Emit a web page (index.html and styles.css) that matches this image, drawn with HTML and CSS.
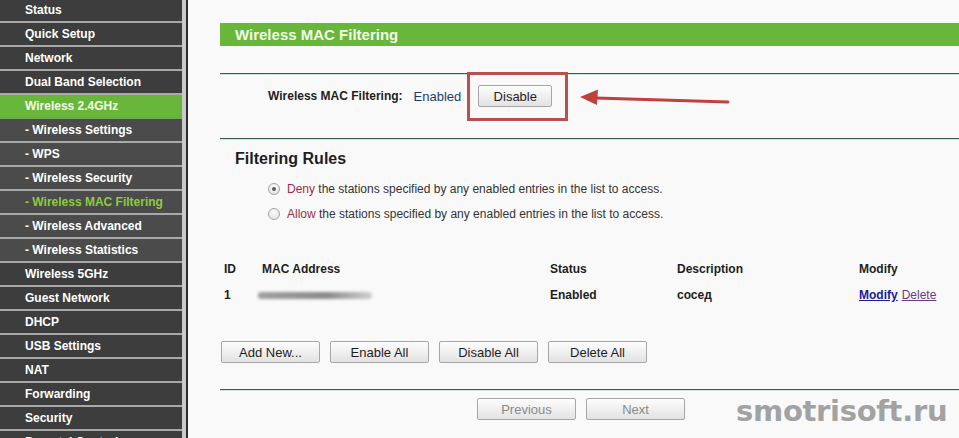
FILE: index.html
```html
<!DOCTYPE html>
<html>
<head>
<meta charset="utf-8">
<title>Wireless MAC Filtering</title>
<link rel="stylesheet" href="styles.css">
</head>
<body>
<div class="page">
  <nav class="sidebar">
    <ul class="menu">
      <li class="item">Status</li>
      <li class="item">Quick Setup</li>
      <li class="item">Network</li>
      <li class="item">Dual Band Selection</li>
      <li class="item item-open">Wireless 2.4GHz</li>
      <li class="item sub">- Wireless Settings</li>
      <li class="item sub">- WPS</li>
      <li class="item sub">- Wireless Security</li>
      <li class="item sub sub-active">- Wireless MAC Filtering</li>
      <li class="item sub">- Wireless Advanced</li>
      <li class="item sub">- Wireless Statistics</li>
      <li class="item">Wireless 5GHz</li>
      <li class="item">Guest Network</li>
      <li class="item">DHCP</li>
      <li class="item">USB Settings</li>
      <li class="item">NAT</li>
      <li class="item">Forwarding</li>
      <li class="item">Security</li>
      <li class="item">Parental Control</li>
    </ul>
  </nav>
  <main class="content">
    <div class="title">Wireless MAC Filtering</div>
    <div class="rule"></div>
    <div class="status-row">
      <span class="status-label">Wireless MAC Filtering:</span>
      <span class="status-value">Enabled</span>
      <button class="btn btn-disable">Disable</button>
    </div>
    <div class="rule rule-2"></div>
    <h2 class="section-title">Filtering Rules</h2>
    <div class="radio-row">
      <span class="radio checked"></span>
      <span class="radio-text"><span class="kw">Deny</span> the stations specified by any enabled entries in the list to access.</span>
    </div>
    <div class="radio-row">
      <span class="radio"></span>
      <span class="radio-text"><span class="kw">Allow</span> the stations specified by any enabled entries in the list to access.</span>
    </div>
    <div class="table">
      <div class="cell head">ID</div>
      <div class="cell head">MAC Address</div>
      <div class="cell head">Status</div>
      <div class="cell head">Description</div>
      <div class="cell head">Modify</div>
      <div class="cell val">1</div>
      <div class="cell"><span class="mac-blur"></span></div>
      <div class="cell val">Enabled</div>
      <div class="cell val">сосед</div>
      <div class="cell links"><a class="link-modify" href="#">Modify</a><a class="link-delete" href="#">Delete</a></div>
    </div>
    <div class="btn-row">
      <button class="btn btn-wide">Add New...</button>
      <button class="btn btn-wide">Enable All</button>
      <button class="btn btn-wide">Disable All</button>
      <button class="btn btn-wide">Delete All</button>
    </div>
    <div class="rule rule-3"></div>
    <div class="nav-row">
      <button class="btn btn-wide btn-off">Previous</button>
      <button class="btn btn-wide btn-off">Next</button>
    </div>
  </main>

  <div class="highlight-box"></div>
  <svg class="arrow" width="160" height="24" viewBox="0 0 160 24">
    <path d="M156 14 L24 10" stroke="#c0403f" stroke-width="3" fill="none" stroke-linecap="round"/>
    <path d="M8 9 L26 1.5 L25 17 Z" fill="#c0403f"/>
  </svg>
  <div class="watermark">smotrisoft.ru</div>
</div>
</body>
</html>
```

FILE: styles.css
```css
* { box-sizing: border-box; }

html, body {
  margin: 0;
  padding: 0;
  background: #f9f9f9;
}

body {
  font-family: "Liberation Sans", Arial, sans-serif;
  color: #222;
}

.page {
  position: relative;
  display: flex;
  height: 438px;
  overflow: hidden;
}

/* ---------- sidebar ---------- */
.sidebar {
  width: 186px;
  flex: 0 0 186px;
  background: #3d3d3d;
  border-right: 4px solid #c9c9c9;
}

.menu {
  list-style: none;
  margin: -1px 0 0 0;
  padding: 0;
}

.item {
  height: 24px;
  line-height: 22px;
  padding-left: 25px;
  font-size: 12px;
  font-weight: bold;
  color: #ffffff;
  background: #3d3d3d;
  border-bottom: 2px solid #a9a9a9;
  white-space: nowrap;
}

.item-open {
  background: #69b73a;
  color: #f2fbe8;
  border-bottom-color: #6fa85a;
}

.sub {
  background: #4b4b4b;
}

.sub-active {
  color: #8fca3f;
}

/* ---------- content ---------- */
.content {
  flex: 1 1 auto;
  border-left: 2px solid #2b2b2b;
  padding-left: 32px;
  background: #f9f9f9;
}

.title {
  margin-top: 23px;
  height: 23px;
  line-height: 23px;
  padding-left: 15px;
  background: #69b73a;
  color: #f4fbe9;
  font-size: 15px;
  font-weight: bold;
}

.rule {
  margin-top: 27px;
  height: 2px;
  border-top: 1px solid #33604b;
  border-bottom: 1px solid #cfe6d8;
}

.rule-2 { margin-top: 31px; }
.rule-3 { margin-top: 26px; }

.status-row {
  display: flex;
  align-items: center;
  height: 22px;
  margin-top: 10px;
  padding-left: 48px;
}

.status-label {
  font-size: 12px;
  font-weight: bold;
  color: #1e1e1e;
}

.status-value {
  margin-left: 11px;
  font-size: 13px;
  color: #1e3d6e;
}

.btn {
  height: 22px;
  padding: 0;
  font-family: "Liberation Sans", Arial, sans-serif;
  font-size: 13px;
  color: #1e1e1e;
  background: linear-gradient(#fdfdfd, #e2e2e2);
  border: 1px solid #a7a7a7;
  border-radius: 2px;
}

.btn-disable {
  width: 74px;
  margin-left: 17px;
}

.section-title {
  margin: 9px 0 0 15px;
  height: 20px;
  line-height: 20px;
  font-size: 16px;
  font-weight: bold;
  color: #1e1e1e;
}

.radio-row {
  display: flex;
  align-items: center;
  height: 25px;
  padding-left: 48px;
  font-size: 12px;
  color: #333;
}

.section-title + .radio-row { margin-top: 7px; }

.radio {
  width: 12px;
  height: 12px;
  border-radius: 50%;
  border: 1px solid #a4a4a4;
  background: radial-gradient(circle at 50% 35%, #fdfdfd, #dcdcdc);
  margin-right: 7px;
  position: relative;
}

.radio.checked::after {
  content: "";
  position: absolute;
  left: 3px;
  top: 3px;
  width: 4px;
  height: 4px;
  border-radius: 50%;
  background: #5c5c5c;
}

.kw { color: #a32b45; }

.table {
  display: grid;
  grid-template-columns: 38px 288px 127px 182px auto;
  grid-auto-rows: 26px;
  margin-top: 30px;
  padding-left: 4px;
  font-size: 12px;
}

.cell {
  display: flex;
  align-items: center;
  white-space: nowrap;
}

.links { gap: 4px; }

.head, .val {
  font-weight: bold;
  color: #1e1e1e;
}

.mac-blur {
  display: block;
  width: 114px;
  height: 7px;
  margin-left: -4px;
  border-radius: 3px;
  background: linear-gradient(90deg, #a0a0a0, #8a8a8a 60%, #cfcfcf);
  filter: blur(1.5px);
}

.link-modify {
  color: #1b1a9a;
  font-weight: bold;
  text-decoration: underline;
}

.link-delete {
  color: #6a3c86;
  text-decoration: underline;
}

.btn-row {
  display: flex;
  gap: 10px;
  margin-top: 33px;
  margin-left: 1px;
}

.btn-wide { width: 99px; }

.nav-row {
  display: flex;
  gap: 10px;
  margin-top: 7px;
  padding-left: 257px;
}

.btn-off { color: #8a8a8a; }

/* ---------- overlays ---------- */
.highlight-box {
  position: absolute;
  left: 467px;
  top: 72px;
  width: 101px;
  height: 49px;
  border: 3px solid #b9504e;
}

.arrow {
  position: absolute;
  left: 572px;
  top: 88px;
}

.watermark {
  position: absolute;
  left: 736px;
  top: 394px;
  font-family: "DejaVu Sans", sans-serif;
  font-size: 29px;
  font-weight: bold;
  color: #a2a2a2;
  letter-spacing: -0.3px;
}
```
